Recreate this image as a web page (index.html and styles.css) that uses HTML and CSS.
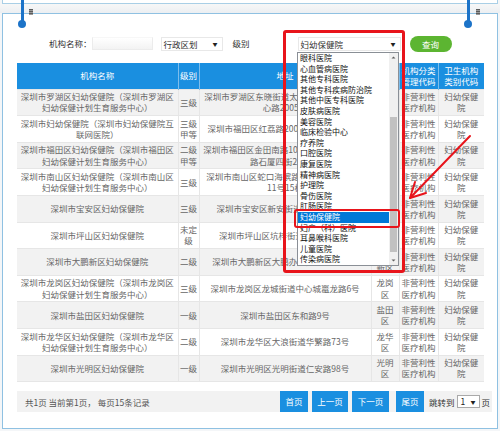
FILE: index.html
```html
<!DOCTYPE html>
<html lang="zh-CN">
<head>
<meta charset="utf-8">
<title>机构查询</title>
<link rel="stylesheet" href="styles.css">
</head>
<body>
<div class="top"></div>
<div class="gap"></div>
<div class="panel">
  <div class="filter">
    <span class="lbl">机构名称：</span>
    <div class="inp"></div>
    <div class="sel sel-area"><span>行政区划</span><span class="arr">▼</span></div>
    <span class="lbl lbl-level">级别</span>
    <div class="sel sel-type"><span>妇幼保健院</span><span class="arr">▼</span></div>
    <button class="btn-query">查询</button>
  </div>
  <table class="grid">
    <colgroup>
      <col class="c1"><col class="c2"><col class="c3"><col class="c4"><col class="c5"><col class="c6">
    </colgroup>
    <thead>
      <tr><th>机构名称</th><th>级别</th><th>地址</th><th>行政区划</th><th>机构分类管理代码</th><th>卫生机构类别代码</th></tr>
    </thead>
    <tbody>
      <tr><td>深圳市罗湖区妇幼保健院（深圳市罗湖区妇幼保健计划生育服务中心）</td><td>三级</td><td>深圳市罗湖区东晓街道太白路怡景花园旁布心路2005号</td><td>罗湖区</td><td>非营利性医疗机构</td><td>妇幼保健院</td></tr>
      <tr><td>深圳市妇幼保健院（深圳市妇幼保健院互联网医院）</td><td>三级甲等</td><td>深圳市福田区红荔路2004号市妇幼保健院</td><td>福田区</td><td>非营利性医疗机构</td><td>妇幼保健院</td></tr>
      <tr><td>深圳市福田区妇幼保健院（深圳市福田区妇幼保健计划生育服务中心）</td><td>二级甲等</td><td>深圳市福田区金田南路1003号福田区石厦南路石厦四街2334号</td><td>福田区</td><td>非营利性医疗机构</td><td>妇幼保健院</td></tr>
      <tr><td>深圳市南山区妇幼保健院（深圳市南山区妇幼保健计划生育服务中心）</td><td>三级</td><td>深圳市南山区蛇口海滨路7号南山区常兴路11号15栋</td><td>南山区</td><td>非营利性医疗机构</td><td>妇幼保健院</td></tr>
      <tr><td>深圳市宝安区妇幼保健院</td><td>三级</td><td>深圳市宝安区新安街道龙井二路56号</td><td>宝安区</td><td>非营利性医疗机构</td><td>妇幼保健院</td></tr>
      <tr><td>深圳市坪山区妇幼保健院</td><td>未定级</td><td>深圳市坪山区坑梓街道人民西路4号</td><td>坪山区</td><td>非营利性医疗机构</td><td>妇幼保健院</td></tr>
      <tr><td>深圳市大鹏新区妇幼保健院</td><td>二级</td><td>深圳市大鹏新区大鹏办事处布新路13号</td><td>大鹏新区</td><td>非营利性医疗机构</td><td>妇幼保健院</td></tr>
      <tr><td>深圳市龙岗区妇幼保健院（深圳市龙岗区妇幼保健计划生育服务中心）</td><td>三级</td><td>深圳市龙岗区龙城街道中心城鼍龙路6号</td><td>龙岗区</td><td>非营利性医疗机构</td><td>妇幼保健院</td></tr>
      <tr><td>深圳市盐田区妇幼保健院</td><td>一级</td><td>深圳市盐田区东和路9号</td><td>盐田区</td><td>非营利性医疗机构</td><td>妇幼保健院</td></tr>
      <tr><td>深圳市龙华区妇幼保健院（深圳市龙华区妇幼保健计划生育服务中心）</td><td>二级</td><td>深圳市龙华区大浪街道华繁路73号</td><td>龙华区</td><td>非营利性医疗机构</td><td>妇幼保健院</td></tr>
      <tr><td>深圳市光明区妇幼保健院</td><td>一级</td><td>深圳市光明区光明街道仁安路98号</td><td>光明区</td><td>非营利性医疗机构</td><td>妇幼保健院</td></tr>
    </tbody>
  </table>
  <div class="pager">
    <span class="pager-info">共1页 当前第1页， 每页15条记录</span>
    <span class="pbtn p-first">首页</span>
    <span class="pbtn p-prev">上一页</span>
    <span class="pbtn p-next">下一页</span>
    <span class="pbtn p-last">尾页</span>
    <span class="jump">跳转到</span>
    <span class="jump-sel"><span>1</span><span class="arr">▼</span></span>
    <span class="unit">页</span>
  </div>
</div>

<div class="binder binder-l"><div class="b-line"></div><div class="b-dot"></div></div>
<div class="clip clip-l"></div>
<div class="binder binder-r"><div class="b-line"></div><div class="b-dot"></div></div>
<div class="clip clip-r"></div>

<div class="note-box"></div>
<div class="dd">
  <div class="dd-items">
    <div class="dd-item">眼科医院</div>
    <div class="dd-item">心血管病医院</div>
    <div class="dd-item">其他专科医院</div>
    <div class="dd-item">其他专科疾病防治院</div>
    <div class="dd-item">其他中医专科医院</div>
    <div class="dd-item">皮肤病医院</div>
    <div class="dd-item">美容医院</div>
    <div class="dd-item">临床检验中心</div>
    <div class="dd-item">疗养院</div>
    <div class="dd-item">口腔医院</div>
    <div class="dd-item">康复医院</div>
    <div class="dd-item">精神病医院</div>
    <div class="dd-item">护理院</div>
    <div class="dd-item">骨伤医院</div>
    <div class="dd-item">肛肠医院</div>
    <div class="dd-item on">妇幼保健院</div>
    <div class="dd-item">妇产（科）医院</div>
    <div class="dd-item">耳鼻喉科医院</div>
    <div class="dd-item">儿童医院</div>
    <div class="dd-item">传染病医院</div>
  </div>
  <div class="dd-scroll">
    <svg class="sb-arrow" width="9" height="9" viewBox="0 0 9 9"><path d="M2.5 5.5 L4.5 3.5 L6.5 5.5 Z" fill="#606060"/></svg>
    <div class="sb-track"><div class="sb-thumb"></div></div>
    <svg class="sb-arrow" width="9" height="9" viewBox="0 0 9 9"><path d="M2.5 3.5 L4.5 5.5 L6.5 3.5 Z" fill="#606060"/></svg>
  </div>
</div>
<div class="sel-ring"></div>
<svg class="pointer" width="500" height="431" viewBox="0 0 500 431">
  <line x1="470" y1="136" x2="410" y2="198" stroke="#e8141b" stroke-width="2" stroke-linecap="round"/>
  <polyline points="426,193 410,198 415,182" fill="none" stroke="#e8141b" stroke-width="2" stroke-linecap="round" stroke-linejoin="round"/>
</svg>
</body>
</html>
```

FILE: styles.css
```css
* { box-sizing: border-box; }
html, body { margin: 0; padding: 0; }
body {
  width: 500px;
  height: 431px;
  overflow: hidden;
  position: relative;
  background: #f4f6f8;
  font-family: "Noto Sans CJK SC", "Noto Sans", sans-serif;
  font-size: 8.5px;
  color: #555;
}

.top {
  height: 4px;
  margin: 0 2px;
  border: 1px solid #a9cfe6;
  border-top: none;
  background: #fff;
}
.gap {
  height: 9px;
  background: linear-gradient(#f7f7f7, #eceff2);
}
.panel {
  margin: 0 2px;
  height: 416px;
  border: 1px solid #8fc1e2;
  background: #fff;
  padding-top: 21px;
}

/* filter row */
.filter {
  display: flex;
  align-items: center;
  height: 17px;
  padding-left: 46px;
}
.lbl { color: #333; white-space: nowrap; line-height: 17px; }
.inp {
  width: 61px;
  height: 13px;
  border: 1px solid #ececec;
  border-top-color: #f7f7f7;
  background: linear-gradient(#fff, #f3f3f3);
}
.sel {
  display: flex;
  justify-content: space-between;
  align-items: center;
  height: 14px;
  padding: 0 4px 0 2px;
  border: 1px solid #e8e8e8;
  background: #fff;
  color: #333;
  line-height: 12px;
}
.arr { font-size: 5px; color: #222; }
.sel-area { width: 62px; margin-left: 8px; }
.lbl-level { margin-left: 10px; }
.sel-type { width: 103px; margin-left: 48px; }
.btn-query {
  margin-left: 9px;
  width: 42px;
  height: 16px;
  padding: 0;
  border: none;
  border-radius: 8px;
  background: #5cb531;
  color: #fff;
  font-family: inherit;
  font-size: 8.5px;
  line-height: 16px;
}

/* table */
.grid {
  margin: 11px 0 0 14px;
  width: 467px;
  border-collapse: collapse;
  table-layout: fixed;
}
.c1 { width: 161px; }
.c2 { width: 21px; }
.c3 { width: 172px; }
.c4 { width: 28px; }
.c5 { width: 39px; }
.c6 { width: 46px; }
.grid th {
  background: #1a8fe0;
  color: #fff;
  font-weight: normal;
  line-height: 11.2px;
  padding: 1.6px 2px;
  border-left: 1px solid #7dbdec;
  text-align: center;
  vertical-align: middle;
}
.grid th:first-child { border-left: none; }
.grid td {
  line-height: 11.2px;
  padding: 1.6px 2px;
  text-align: center;
  vertical-align: middle;
  border: 1px solid #e6e6e6;
  color: #666;
}
.grid td:first-child { border-left: none; }
.grid td:last-child { border-right: none; }
.grid th:nth-child(2), .grid td:nth-child(2) { padding-left: 1px; padding-right: 1px; }
.grid th:nth-child(6), .grid td:nth-child(6) { padding-left: 3px; padding-right: 3px; }
.grid tbody tr:nth-child(odd) td { background: #f2f2f2; }
.grid tbody tr:nth-child(even) td { background: #fff; }

/* pager */
.pager {
  display: flex;
  align-items: center;
  margin: 9px 0 0 14px;
  width: 475px;
  height: 21px;
  padding-left: 8px;
  background: #f2f2f2;
  color: #555;
  white-space: nowrap;
}
.pager-info { width: 255px; }
.pbtn {
  height: 21px;
  line-height: 21px;
  background: #1a8fe0;
  color: #fff;
  text-align: center;
}
.p-first { width: 28px; }
.p-prev { width: 36px; margin-left: 4px; }
.p-next { width: 37px; margin-left: 4px; }
.p-last { width: 28px; margin-left: 7px; }
.jump { margin-left: 5px; color: #333; }
.jump-sel {
  display: flex;
  align-items: center;
  justify-content: space-between;
  margin-left: 2px;
  width: 23px;
  height: 13px;
  padding: 0 3px;
  border: 1px solid #a9a9a9;
  background: #fff;
  color: #222;
  line-height: 11px;
}
.unit { margin-left: 2px; color: #333; }

/* binder decorations */
.binder { position: absolute; top: 0; width: 8px; height: 29px; }
.binder-l { left: 18px; }
.binder-r { left: 464px; }
.b-line { position: absolute; left: 2.5px; top: 0; width: 3px; height: 24px; background: #1c73c8; }
.b-dot { position: absolute; left: 0; top: 20px; width: 8px; height: 8px; border-radius: 50%; background: #1c73c8; }
.clip {
  position: absolute;
  top: 9px;
  width: 4px;
  height: 6px;
  background: repeating-linear-gradient(#5c5c5c 0 1px, #9a9a9a 1px 2px);
}
.clip-l { left: 29px; }
.clip-r { left: 476px; }

/* annotation & dropdown overlay */
.note-box {
  position: absolute;
  left: 283px;
  top: 30px;
  width: 122px;
  height: 243px;
  border: 3px solid #e8141b;
  border-radius: 3px;
}
.dd {
  position: absolute;
  left: 297px;
  top: 52px;
  width: 102px;
  height: 214px;
  border: 1px solid #8a8f96;
  background: #fff;
  display: flex;
}
.dd-items {
  flex: 1;
  font-size: 8px;
  line-height: 10.6px;
  color: #111;
}
.dd-item { padding-left: 2px; white-space: nowrap; }
.dd-item.on { background: #0078d7; color: #fff; }
.dd-scroll {
  width: 9px;
  display: flex;
  flex-direction: column;
  background: #f0f0f0;
}
.sb-arrow { display: block; flex: none; }
.sb-track { flex: 1; }
.sb-thumb {
  margin: 55px 1px 0 1px;
  height: 135px;
  background: #c1c1c1;
}
.sel-ring {
  position: absolute;
  left: 294px;
  top: 209px;
  width: 106px;
  height: 19px;
  border: 2px solid #e8141b;
  border-radius: 3px;
}
.pointer { position: absolute; left: 0; top: 0; pointer-events: none; }
```
